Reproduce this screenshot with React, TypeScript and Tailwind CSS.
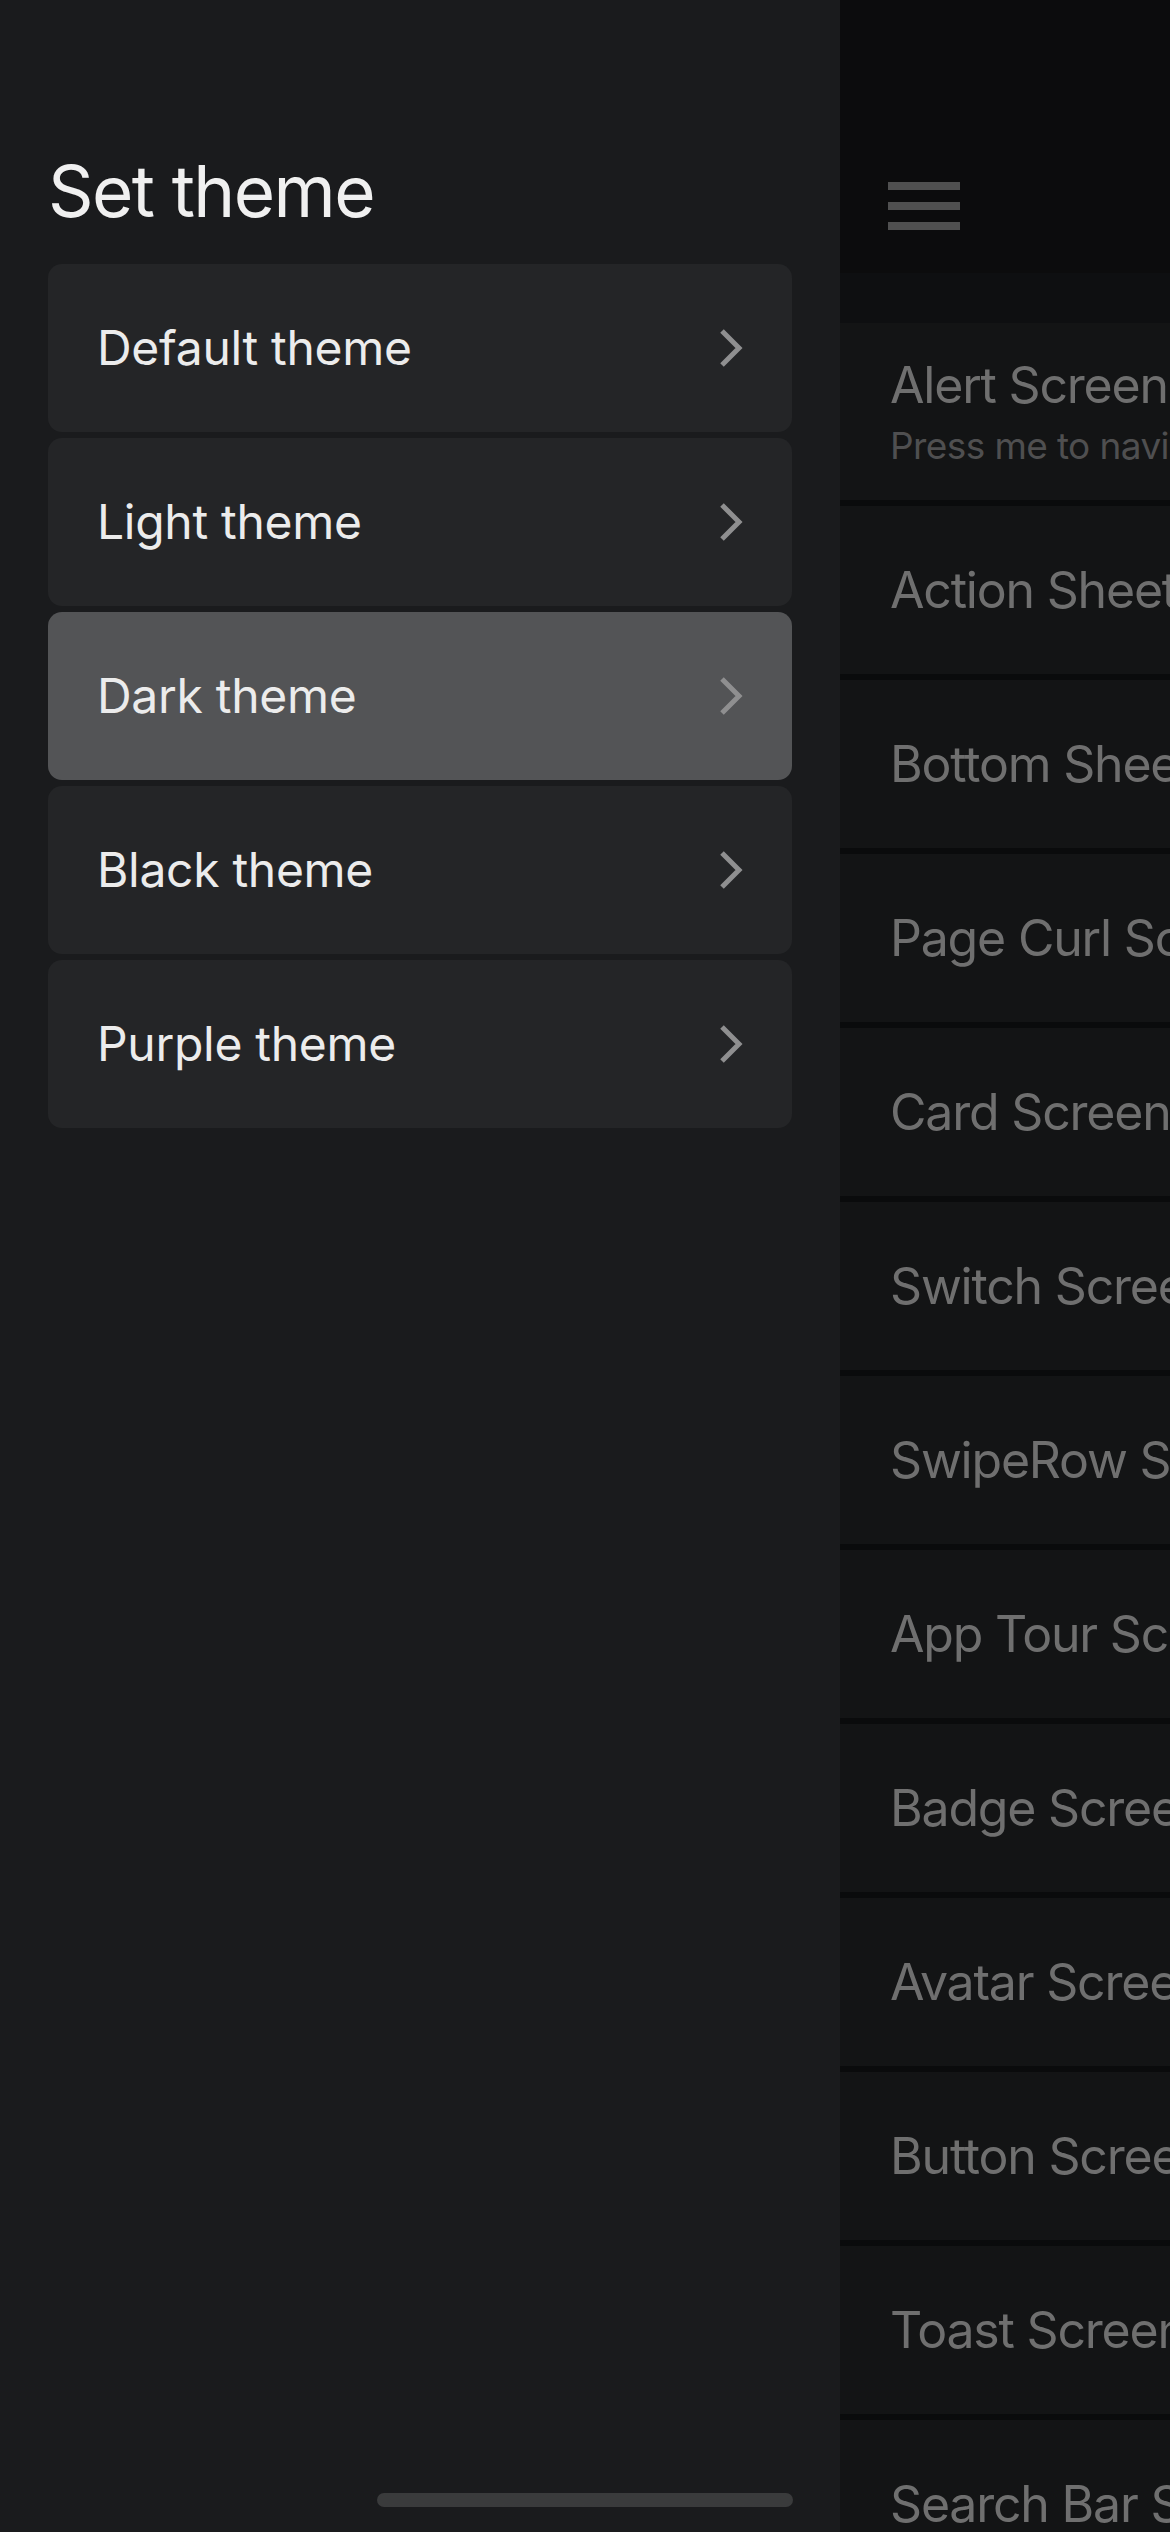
import React from 'react';

const themes = ['Default theme', 'Light theme', 'Dark theme', 'Black theme', 'Purple theme'];

const screens = [
  'Action Sheet Screen',
  'Bottom Sheet Screen',
  'Page Curl Screen',
  'Card Screens',
  'Switch Screen',
  'SwipeRow Screen',
  'App Tour Screen',
  'Badge Screen',
  'Avatar Screen',
  'Button Screen',
  'Toast Screen',
  'Search Bar Screen',
];

const Chevron = () => (
  <svg width="26" height="40" viewBox="0 0 26 40" className="shrink-0">
    <polyline points="4,3 21,20 4,37" fill="none" stroke="#8f8f90" strokeWidth="5" />
  </svg>
);

const ThemeRow = ({ name, active }: { name: string; active: boolean }) => (
  <div
    className={`flex h-[168px] items-center justify-between rounded-[14px] pl-[49px] pr-[48px] ${
      active ? 'bg-[#535456]' : 'bg-[#242527]'
    }`}
  >
    <span className="text-[48px] leading-none tracking-[-0.3px] text-[#ececec]">{name}</span>
    <Chevron />
  </div>
);

const App = () => {
  return (
    <div
      className="relative flex h-[2532px] w-[1170px] overflow-hidden bg-[#1a1b1d]"
      style={{ fontFamily: 'Inter, "Noto Sans", sans-serif' }}
    >
      {/* drawer */}
      <div className="w-[840px] shrink-0 bg-[#1a1b1d] px-[48px] pt-[156px]">
        <h1 className="text-[71px] font-normal leading-none tracking-[-1.6px] text-[#f0f0f0]">Set theme</h1>
        <div className="mt-[37px] flex flex-col gap-[6px]">
          {themes.map((t) => (
            <ThemeRow key={t} name={t} active={t === 'Dark theme'} />
          ))}
        </div>
      </div>

      {/* main screen behind overlay */}
      <div className="flex min-w-0 flex-1 flex-col overflow-hidden bg-[#0a0b0c]">
        <div className="h-[273px] shrink-0 bg-[#0c0c0d] pl-[48px] pt-[182px]">
          <div className="flex w-[72px] flex-col gap-[12px]">
            <div className="h-[8px] bg-[#505050]" />
            <div className="h-[8px] bg-[#505050]" />
            <div className="h-[8px] bg-[#505050]" />
          </div>
        </div>
        <div className="h-[50px] shrink-0 bg-[#0e0f11]" />
        <div className="flex flex-col gap-[6px]">
          <div className="flex h-[177px] flex-col justify-center gap-[17px] bg-[#131415] pl-[50px] whitespace-nowrap">
            <span className="text-[50px] leading-none tracking-[-1.2px] text-[#6f6f6f]">Alert Screens</span>
            <span className="text-[37px] leading-none tracking-[-0.6px] text-[#4f4f50]">Press me to navigate to alerts</span>
          </div>
          {screens.map((s) => (
            <div key={s} className="flex h-[168px] shrink-0 items-center bg-[#131415] pl-[50px] whitespace-nowrap">
              <span className="text-[50px] leading-none tracking-[-1.2px] text-[#6f6f6f]">{s}</span>
            </div>
          ))}
        </div>
      </div>

      {/* home indicator */}
      <div className="absolute left-[377px] top-[2493px] h-[14px] w-[416px] rounded-full bg-[#3a3b3c]" />
    </div>
  );
};

export default App;
